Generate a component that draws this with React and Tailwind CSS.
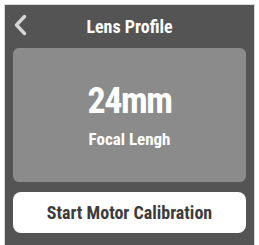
import React from 'react'

const App = () => {
  return (
    <div className="w-[259px] h-[245px] bg-white pt-[4px] px-[4px] overflow-hidden font-['Roboto_Condensed',sans-serif]">
      <div className="h-full bg-[#545454] border border-[#d8d8d8] border-b-0 flex flex-col px-[8px]">
        <div className="h-[43px] flex items-center relative">
          <svg className="absolute left-0 top-[9px]" width="14" height="22" viewBox="0 0 14 22">
            <path d="M11.5 2.5 L3.5 11 L11.5 19.5" fill="none" stroke="#d6d6d6" strokeWidth="3.4" strokeLinecap="round" strokeLinejoin="round" />
          </svg>
          <h1 className="w-full text-center text-white font-bold text-[18px]">Lens Profile</h1>
        </div>
        <div className="h-[134px] bg-[#8b8b8b] rounded-[6px] flex flex-col items-center justify-center">
          <div className="text-white font-bold text-[36px] leading-none tracking-[-1.5px]">24mm</div>
          <div className="text-white font-bold text-[17px] leading-none mt-[12px]">Focal Lengh</div>
        </div>
        <button className="mt-[10px] h-[41px] bg-white rounded-[8px] text-[#3c3c3c] font-bold text-[18px] flex items-center justify-center">
          Start Motor Calibration
        </button>
      </div>
    </div>
  )
}

export default App
